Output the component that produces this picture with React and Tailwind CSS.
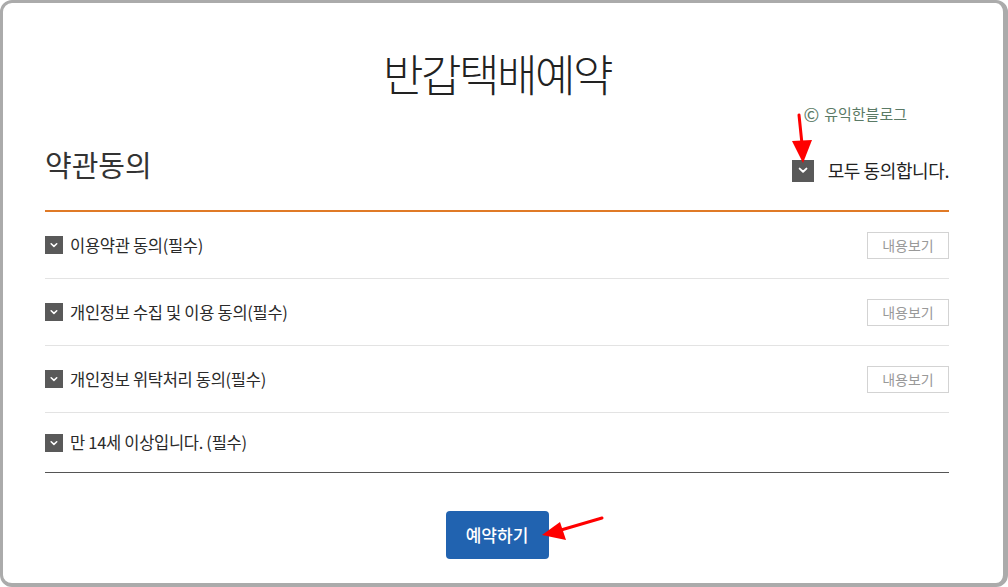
import React from "react";

const font = { fontFamily: '"Noto Sans CJK KR", "Noto Sans", sans-serif' };

function Check({ size = 18 }) {
  return (
    <div
      className="flex items-center justify-center bg-[#595959] shrink-0"
      style={{ width: size, height: size }}
    >
      <svg width={size * 0.55} height={size * 0.55} viewBox="0 0 10 10">
        <path d="M2.2 3.8 L5 6.4 L7.8 3.8" fill="none" stroke="#fff" strokeWidth="1.6" strokeLinecap="round" strokeLinejoin="round" />
      </svg>
    </div>
  );
}

function Row({ label, view, last }) {
  return (
    <div className={`flex items-center justify-between ${last ? "h-[60px] border-b border-[#555]" : "h-[67px] border-b border-[#e3e3e3]"}`}>
      <div className="flex items-center gap-[7px]">
        <Check />
        <span className="text-[16.5px] text-[#2a2a2a] tracking-[-0.3px]">{label}</span>
      </div>
      {view && (
        <div className="w-[82px] h-[27px] border border-[#d3d3d3] flex items-center justify-center text-[14px] text-[#999]">
          내용보기
        </div>
      )}
    </div>
  );
}

export default function App() {
  return (
    <div className="w-[1008px] h-[587px] bg-white relative" style={font}>
      <div className="w-[1008px] h-[587px] border-t-[3px] border-l-[3px] border-r-[5px] border-b-[4px] border-[#ababab] rounded-[12px] bg-white">
        <div className="w-[904px] ml-[42px]">
          <h1 className="text-center text-[44px] font-light text-[#222] leading-none pt-[48px] tracking-[-2.5px]">
            반갑택배예약
          </h1>
          <div className="flex justify-end items-center pr-[42px] mt-[8px] h-[20px] text-[#5b7a66] leading-none">
            <span className="text-[19px] mr-[5px]">©</span>
            <span className="text-[15px]">유익한블로그</span>
          </div>
          <div className="flex items-end justify-between mt-[27px] pb-[31px] border-b-2 border-[#e07a26]">
            <span className="text-[29px] text-[#333] leading-none">약관동의</span>
            <div className="flex items-center gap-[14px] mb-[-5px]">
              <Check size={22} />
              <span className="text-[18px] text-[#222] tracking-[-0.4px]">모두 동의합니다.</span>
            </div>
          </div>
          <Row label="이용약관 동의(필수)" view />
          <Row label="개인정보 수집 및 이용 동의(필수)" view />
          <Row label="개인정보 위탁처리 동의(필수)" view />
          <Row label="만 14세 이상입니다. (필수)" last />
          <div className="flex justify-center mt-[38px]">
            <button className="w-[103px] h-[48px] rounded-[4px] bg-[#2163b0] text-white text-[17px] font-medium">
              예약하기
            </button>
          </div>
        </div>
      </div>
      <svg className="absolute left-[790px] top-[112px]" width="28" height="54" viewBox="0 0 28 54">
        <path d="M9 3 L12 32" stroke="#ff0000" strokeWidth="3" strokeLinecap="round" />
        <path d="M2 29 L22 28 L13 51 Z" fill="#ff0000" />
      </svg>
      <svg className="absolute left-[536px] top-[512px]" width="70" height="34" viewBox="0 0 70 34">
        <path d="M66 6 L25 18" stroke="#ff0000" strokeWidth="3" strokeLinecap="round" />
        <path d="M6 23 L24 10 L30 28 Z" fill="#ff0000" />
      </svg>
    </div>
  );
}
